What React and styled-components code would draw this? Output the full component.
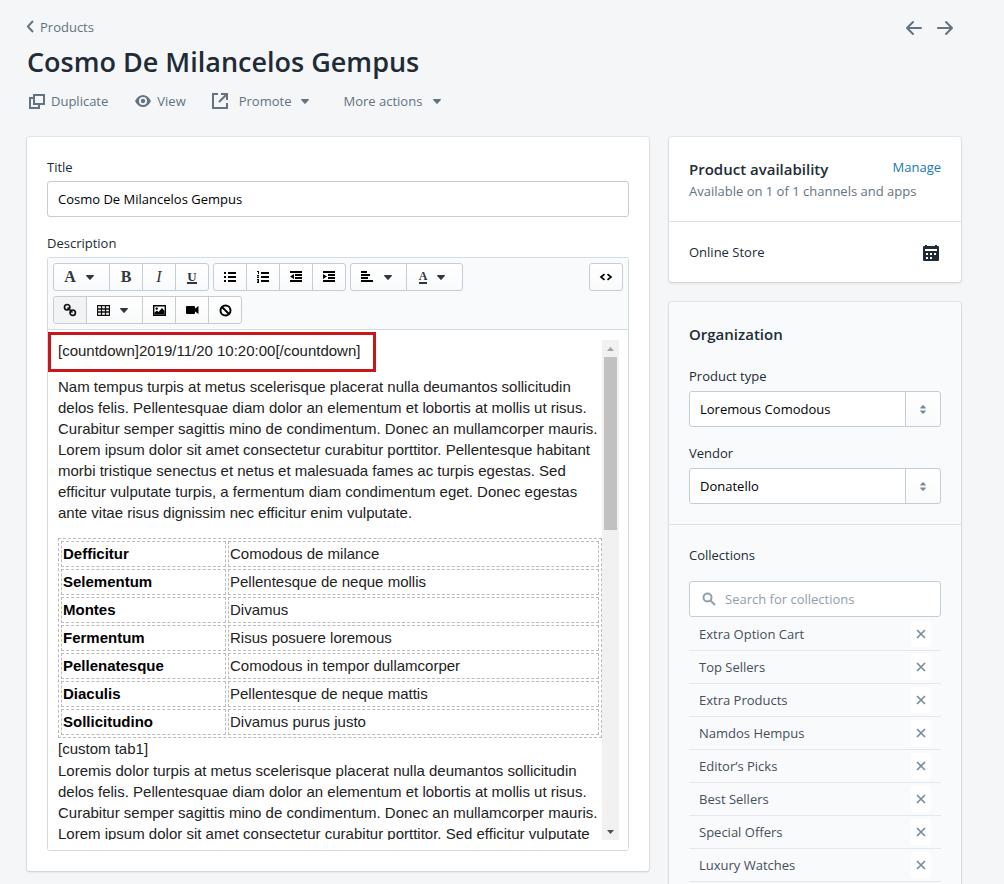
import React from "react";
import styled, { createGlobalStyle } from "styled-components";

const GlobalStyle = createGlobalStyle`
  *, *::before, *::after { box-sizing: border-box; }
  body {
    margin: 0;
    background: #f4f6f8;
    color: #212b36;
    font: 400 13px/20px "Open Sans", "Noto Sans", sans-serif;
  }
  button, input, select { font: inherit; color: inherit; }
  h1, h2, p { margin: 0; font-weight: inherit; }
  svg { display: block; flex: none; }
`;

const Page = styled.div`
  padding: 15px 43px 16px 27px;
`;

const TopRow = styled.div`
  display: flex;
  justify-content: space-between;
  align-items: center;
  height: 24px;
`;

const Breadcrumb = styled.a`
  display: flex;
  align-items: center;
  gap: 5px;
  color: #637381;
  text-decoration: none;
`;

const Pager = styled.nav`
  display: flex;
  gap: 13px;
  padding: 2px 7px 0 0;
`;

const PlainButton = styled.button`
  display: flex;
  align-items: center;
  gap: ${(p) => p.$gap || 0}px;
  padding: 0;
  border: 0;
  background: none;
  color: #637381;
  cursor: pointer;
`;

const PageTitle = styled.h1`
  margin-top: 4px;
  font-size: 27px;
  line-height: 38px;
  font-weight: 600;
`;

const Actions = styled.div`
  display: flex;
  align-items: center;
  margin: 10px 0 26px;
  padding-left: 1px;
`;

const ActionSlot = styled.div`
  margin-right: ${(p) => p.$after}px;
`;

const Columns = styled.div`
  display: grid;
  grid-template-columns: minmax(0, 1fr) 292px;
  gap: 20px;
  align-items: start;
`;

const Side = styled.aside`
  display: grid;
  gap: 20px;
`;

const Card = styled.section`
  border-radius: 3px;
  background: ${(p) => (p.$muted ? "#f9fafb" : "#fff")};
  box-shadow: 0 0 0 1px rgba(63, 63, 68, 0.08), 0 1px 3px rgba(63, 63, 68, 0.16);
`;

const CardSection = styled.div`
  padding: 20px;
  & + & { border-top: 1px solid #dfe3e8; }
`;

const Label = styled.label`
  display: block;
  margin-bottom: ${(p) => p.$gap || 4}px;
`;

const Field = styled.div`
  & + & { margin-top: 16px; }
`;

const TextInput = styled.input`
  display: block;
  width: 100%;
  height: 36px;
  padding: 0 10px;
  border: 1px solid #c4cdd5;
  border-radius: 3px;
  background: #fff;
  color: #000;
`;

const Editor = styled.div`
  border: 1px solid #d3dbe2;
  border-radius: 3px;
`;

const Toolbar = styled.div`
  display: flex;
  justify-content: space-between;
  align-items: flex-start;
  padding: 5px;
  border-bottom: 1px solid #d3dbe2;
  background: #f9fafc;
`;

const ToolGroups = styled.div`
  display: flex;
  flex-wrap: wrap;
  gap: 5px 4px;
  max-width: 440px;
`;

const ToolGroup = styled.div`
  display: flex;
  border: 1px solid #c4cdd5;
  border-radius: 3px;
  background: linear-gradient(#fff, #f9fafb);
  overflow: hidden;
`;

const ToolButton = styled.button`
  display: flex;
  align-items: center;
  justify-content: center;
  gap: 10px;
  width: ${(p) => (p.$menu ? 55 : 32)}px;
  height: 26px;
  padding: 0 ${(p) => (p.$menu ? 5 : 0)}px 0 0;
  border: 0;
  background: ${(p) => (p.$active ? "#f1f3f5" : "transparent")};
  color: #000;
  cursor: pointer;
  & + & { border-left: 1px solid #c4cdd5; }
  &:not(:first-child) { width: ${(p) => (p.$menu ? 56 : 33)}px; }
`;

const Glyph = styled.span`
  color: #31373d;
  font: ${(p) => (p.$italic ? "italic 400" : "700")} ${(p) => p.$size || 16}px/18px "Liberation Serif", serif;
  ${(p) => p.$line && "border-bottom: 2px solid #31373d; line-height: 11px;"}
`;

const EditorBody = styled.div`
  position: relative;
  display: flex;
  height: 520px;
  padding: 10px 9px 10px 10px;
  background: #fff;
`;

const Document = styled.div`
  flex: 1;
  min-width: 0;
  overflow: hidden;
  color: #222;
  font: 15px/21px "Liberation Sans", Arial, sans-serif;
`;

const Paragraph = styled.p`
  margin-bottom: ${(p) => p.$after || 0}px;
`;

const Highlight = styled.div`
  position: absolute;
  top: 2px;
  left: 0;
  width: 328px;
  height: 40px;
  border: 3px solid #c8161d;
  pointer-events: none;
`;

const SpecTable = styled.table`
  width: 100%;
  border: 1px dashed #bbb;
  border-spacing: 2px;
  table-layout: fixed;
`;

const SpecCell = styled.td`
  width: ${(p) => (p.$name ? "165px" : "auto")};
  height: 26px;
  padding: 1px;
  border: 1px dashed #bbb;
  color: ${(p) => (p.$name ? "#000" : "#222")};
  line-height: 22px;
  vertical-align: top;
  font-weight: ${(p) => (p.$name ? 700 : 400)};
`;

const ScrollTrack = styled.div`
  display: flex;
  flex-direction: column;
  align-items: center;
  width: 17px;
  background: #f1f1f1;
`;

const ScrollArrow = styled.div`
  display: flex;
  align-items: center;
  justify-content: center;
  height: 17px;
`;

const ScrollThumb = styled.div`
  width: 13px;
  height: 173px;
  margin-bottom: auto;
  background: #c1c1c1;
`;

const Heading = styled.h2`
  margin-bottom: ${(p) => p.$after || 0}px;
  font-size: 15px;
  line-height: 24px;
  font-weight: 600;
`;

const HeadRow = styled.div`
  display: flex;
  justify-content: space-between;
`;

const ManageLink = styled.a`
  color: #1878b9;
  text-decoration: none;
`;

const Muted = styled.p`
  color: #637381;
`;

const ChannelRow = styled.div`
  display: flex;
  align-items: center;
  justify-content: space-between;
`;

const StoreIcon = styled.svg`
  margin-top: 2px;
`;

const SelectWrap = styled.div`
  position: relative;
  height: 36px;
  border: 1px solid #c4cdd5;
  border-radius: 3px;
  background: linear-gradient(#fff, #f9fafb);
`;

const Select = styled.select`
  appearance: none;
  display: block;
  width: 100%;
  height: 34px;
  padding: 0 44px 0 10px;
  border: 0;
  border-radius: 3px;
  background: linear-gradient(#c4cdd5, #c4cdd5) right 34px top 0 / 1px 100% no-repeat,
    linear-gradient(#fff, #fff) left / calc(100% - 34px) 100% no-repeat;
  color: #000;
`;

const SelectIcon = styled.svg`
  position: absolute;
  top: 13px;
  right: 14px;
  pointer-events: none;
`;

const SearchBox = styled.div`
  display: flex;
  align-items: center;
  gap: 9px;
  height: 36px;
  margin-top: 16px;
  padding: 0 12px;
  border: 1px solid #c4cdd5;
  border-radius: 3px;
  background: #fff;
`;

const SearchInput = styled.input`
  flex: 1;
  min-width: 0;
  padding: 0;
  border: 0;
  outline: 0;
  background: none;
  &::placeholder { color: #919eab; opacity: 1; }
`;

const CollectionList = styled.ul`
  margin: 0;
  padding: 1px 0 0;
  list-style: none;
`;

const CollectionItem = styled.li`
  display: flex;
  align-items: center;
  justify-content: space-between;
  height: 33px;
  padding: 0 10px;
  border-bottom: 1px solid #e4e8ec;
  color: #454f5b;
`;

const RemoveButton = styled.button`
  display: flex;
  align-items: center;
  justify-content: center;
  width: 20px;
  height: 26px;
  padding: 0;
  border: 0;
  border-radius: 3px;
  background: #fff;
  color: #798c9c;
`;

const Caret = ({ color = "#637381" }) => (
  <svg width="8" height="5" viewBox="0 0 8 5"><path d="M.6 0h6.800q.8.200.4 1L4.600 4.600q-.6.6-1.200 0L.2 1Q-.2.2.6 0z" fill={color} /></svg>
);

const Arrow = ({ flip }) => (
  <svg width="18" height="16" viewBox="0 0 18 16" fill="none" stroke="#637381" strokeWidth="2" strokeLinecap="round" strokeLinejoin="round">
    <path d={flip ? "M2 8h14M10 2l6 6-6 6" : "M16 8H2M8 2L2 8l6 6"} />
  </svg>
);

const Lines = ({ children }) => (
  <svg width="14" height="12" viewBox="0 0 14 12" fill="#000">{children}</svg>
);

const icons = {
  bullets: <Lines><path d="M1 1h2v2H1zM1 5h2v2H1zM1 9h2v2H1zM5 1h8v2H5zM5 5h8v2H5zM5 9h8v2H5z" /></Lines>,
  numbers: <Lines><path d="M5 1h8v2H5zM5 5h8v2H5zM5 9h8v2H5zM1 0h2v3H2V1H1zM1 4h2v1L2 6h1v1H1V6l1-1H1zM1 8h2v4H1v-1h1v-.5H1v-1h1V9H1z" /></Lines>,
  outdent: <Lines><path d="M1 0h12v2H1zM6 3h7v2H6zM6 6h7v2H6zM1 9h12v2H1zM1 5.500L5 3v5z" /></Lines>,
  indent: <Lines><path d="M1 0h12v2H1zM6 3h7v2H6zM6 6h7v2H6zM1 9h12v2H1zM5 5.500L1 3v5z" /></Lines>,
  align: <Lines><path d="M1 0h6v2H1zM1 3h9v2H1zM1 6h7v2H1zM1 9h12v2H1z" /></Lines>,
  code: (
    <svg width="14" height="10" viewBox="0 0 14 10" fill="none" stroke="#000" strokeWidth="1.700"><path d="M5.500 2.200L2 5l3.500 2.800M8.500 2.200L12 5 8.500 7.800" /></svg>
  ),
  link: (
    <svg width="14" height="14" viewBox="0 0 14 14" fill="none" stroke="#111" strokeWidth="1.700">
      <circle cx="4.200" cy="4.200" r="2.700" /><circle cx="9.700" cy="9.700" r="2.700" /><path d="M4.500 4.500l5 5" />
    </svg>
  ),
  table: (
    <svg width="13" height="11" viewBox="0 0 13 11" fill="none" stroke="#111"><path d="M.5.5h12v10H.5zM.5 4h12M.5 7h12M4.500.5v10M8.500.5v10" strokeWidth="1.300" /></svg>
  ),
  image: (
    <svg width="13" height="11" viewBox="0 0 13 11"><path d="M.7.7h11.600v9.600H.7z" fill="#fff" stroke="#000" strokeWidth="1.400" /><circle cx="3.700" cy="3.600" r="1.200" /><path d="M1.500 9.500V7.500L4 5.500 5.500 7 9 3l2.500 3v3.500z" /></svg>
  ),
  video: (
    <svg width="13" height="10" viewBox="0 0 13 10"><path d="M1 1h7q1 0 1 1v1.500L12.500 1v8L9 6.500V8q0 1-1 1H1Q0 9 0 8V2q0-1 1-1z" /></svg>
  ),
  clear: (
    <svg width="13" height="13" viewBox="0 0 13 13" fill="none" stroke="#000" strokeWidth="2"><circle cx="6.500" cy="6.500" r="5" /><path d="M3 3l7 7" /></svg>
  ),
};

const darkCaret = <Caret color="#31373d" />;

const toolGroups = [
  [
    { name: "Formatting", menu: true, icon: <Glyph>A</Glyph> },
    { name: "Bold", icon: <Glyph>B</Glyph> },
    { name: "Italic", icon: <Glyph $italic>I</Glyph> },
    { name: "Underline", icon: <Glyph $size={13} $line>U</Glyph> },
  ],
  [
    { name: "Bulleted list", icon: icons.bullets },
    { name: "Numbered list", icon: icons.numbers },
    { name: "Outdent", icon: icons.outdent },
    { name: "Indent", icon: icons.indent },
  ],
  [
    { name: "Alignment", menu: true, icon: icons.align },
    { name: "Color", menu: true, icon: <Glyph $size={12} $line>A</Glyph> },
  ],
  [
    { name: "Insert link", active: true, icon: icons.link },
    { name: "Insert table", menu: true, icon: icons.table },
    { name: "Insert image", icon: icons.image },
    { name: "Insert video", icon: icons.video },
    { name: "Clear formatting", icon: icons.clear },
  ],
];

const specs = [
  ["Defficitur", "Comodous de milance"],
  ["Selementum", "Pellentesque de neque mollis"],
  ["Montes", "Divamus"],
  ["Fermentum", "Risus posuere loremous"],
  ["Pellenatesque", "Comodous in tempor dullamcorper"],
  ["Diaculis", "Pellentesque de neque mattis"],
  ["Sollicitudino", "Divamus purus justo"],
];

const collections = [
  "Extra Option Cart",
  "Top Sellers",
  "Extra Products",
  "Namdos Hempus",
  "Editor’s Picks",
  "Best Sellers",
  "Special Offers",
  "Luxury Watches",
];

function SelectField({ id, label, value }) {
  return (
    <Field>
      <Label htmlFor={id} $gap={5}>{label}</Label>
      <SelectWrap>
        <Select id={id} defaultValue={value}><option>{value}</option></Select>
        <SelectIcon width="6" height="9" viewBox="0 0 6 9" fill="#798c9c"><path d="M.5 3.500h5q.6-.2.2-.8L3.500.3Q3 0 2.500.3L.3 2.700q-.4.6.2.8zM.5 5.500h5q.6.2.2.8L3.500 8.700q-.5.3-1 0L.3 6.300q-.4-.6.2-.8z" /></SelectIcon>
      </SelectWrap>
    </Field>
  );
}

export default function App() {
  return (
    <>
      <GlobalStyle />
      <Page>
        <TopRow>
          <Breadcrumb href="#products">
            <svg width="8" height="14" viewBox="0 0 8 14" fill="none" stroke="#637381" strokeWidth="2"><path d="M6 1L.8 6.500 6 12" /></svg>
            Products
          </Breadcrumb>
          <Pager>
            <PlainButton aria-label="Previous"><Arrow /></PlainButton>
            <PlainButton aria-label="Next"><Arrow flip /></PlainButton>
          </Pager>
        </TopRow>
        <PageTitle>Cosmo De Milancelos Gempus</PageTitle>
        <Actions>
          <ActionSlot $after={27}>
            <PlainButton $gap={6}>
              <svg width="17" height="17" viewBox="0 0 17 17" fill="none" stroke="#637381" strokeWidth="2"><path d="M6 2h10v9H6zM5 5H2v10h9v-3" /></svg>
              Duplicate
            </PlainButton>
          </ActionSlot>
          <ActionSlot $after={25}>
            <PlainButton $gap={6}>
              <svg width="16" height="12" viewBox="0 0 16 12" fill="#637381"><path fillRule="evenodd" d="M0 6C4-2 12-2 16 6 12 14 4 14 0 6zM8 2a4 4 0 1 0 0 8 4 4 0 0 0 0-8z" /><circle cx="8" cy="6" r="2.200" /></svg>
              View
            </PlainButton>
          </ActionSlot>
          <ActionSlot $after={34}>
            <PlainButton $gap={10}>
              <svg width="18" height="18" viewBox="0 0 18 18" fill="none" stroke="#637381" strokeWidth="2"><path d="M7 2H2v14h14v-5M10 2h6v6M16 2L8 10" /></svg>
              Promote
              <Caret />
            </PlainButton>
          </ActionSlot>
          <PlainButton $gap={11}>
            More actions
            <Caret />
          </PlainButton>
        </Actions>
        <Columns>
          <Card as="main">
            <CardSection>
              <Field>
                <Label htmlFor="title">Title</Label>
                <TextInput id="title" defaultValue="Cosmo De Milancelos Gempus" />
              </Field>
              <Field>
                <Label as="div">Description</Label>
                <Editor>
                  <Toolbar>
                    <ToolGroups>
                      {toolGroups.map((group, i) => (
                        <ToolGroup key={i}>
                          {group.map((t) => (
                            <ToolButton key={t.name} aria-label={t.name} $menu={t.menu} $active={t.active}>
                              {t.icon}
                              {t.menu && darkCaret}
                            </ToolButton>
                          ))}
                        </ToolGroup>
                      ))}
                    </ToolGroups>
                    <ToolGroup>
                      <ToolButton aria-label="Show HTML">{icons.code}</ToolButton>
                    </ToolGroup>
                  </Toolbar>
                  <EditorBody>
                    <Document>
                      <Paragraph $after={15}>[countdown]2019/11/20 10:20:00[/countdown]</Paragraph>
                      <Paragraph $after={15}>
                        Nam tempus turpis at metus scelerisque placerat nulla deumantos sollicitudin delos felis.
                        Pellentesquae diam dolor an elementum et lobortis at mollis ut risus. Curabitur semper
                        sagittis mino de condimentum. Donec an mullamcorper mauris. Lorem ipsum dolor sit amet
                        consectetur curabitur porttitor. Pellentesque habitant morbi tristique senectus et netus et
                        malesuada fames ac turpis egestas. Sed efficitur vulputate turpis, a fermentum diam
                        condimentum eget. Donec egestas ante vitae risus dignissim nec efficitur enim vulputate.
                      </Paragraph>
                      <SpecTable>
                        <tbody>
                          {specs.map(([name, value]) => (
                            <tr key={name}>
                              <SpecCell as="th" scope="row" align="left" $name>{name}</SpecCell>
                              <SpecCell>{value}</SpecCell>
                            </tr>
                          ))}
                        </tbody>
                      </SpecTable>
                      <Paragraph $after={1}>[custom tab1]</Paragraph>
                      <Paragraph>
                        Loremis dolor turpis at metus scelerisque placerat nulla deumantos sollicitudin delos felis.
                        Pellentesquae diam dolor an elementum et lobortis at mollis ut risus. Curabitur semper
                        sagittis mino de condimentum. Donec an mullamcorper mauris. Lorem ipsum dolor sit amet
                        consectetur curabitur porttitor. Sed efficitur vulputate
                      </Paragraph>
                    </Document>
                    <ScrollTrack>
                      <ScrollArrow><svg width="7" height="4" viewBox="0 0 7 4" fill="#a3a3a3"><path d="M0 4h7L3.500 0z" /></svg></ScrollArrow>
                      <ScrollThumb />
                      <ScrollArrow><svg width="7" height="4" viewBox="0 0 7 4" fill="#505050"><path d="M0 0h7L3.500 4z" /></svg></ScrollArrow>
                    </ScrollTrack>
                    <Highlight />
                  </EditorBody>
                </Editor>
              </Field>
            </CardSection>
          </Card>
          <Side>
            <Card>
              <CardSection>
                <HeadRow>
                  <Heading>Product availability</Heading>
                  <ManageLink href="#manage">Manage</ManageLink>
                </HeadRow>
                <Muted>Available on 1 of 1 channels and apps</Muted>
              </CardSection>
              <CardSection>
                <ChannelRow>
                  Online Store
                  <StoreIcon width="20" height="18" viewBox="0 0 20 18" fill="#212b36">
                    <path fillRule="evenodd" d="M4 2V1h2v1h8V1h2v1h1q1 0 1 1v13q0 1-1 1H3q-1 0-1-1V3q0-1 1-1zM4 5v2h12V5zM5 9v2h2V9zM9 9v2h2V9zM13 9v2h2V9zM5 13v2h2v-2zM9 13v2h2v-2z" />
                  </StoreIcon>
                </ChannelRow>
              </CardSection>
            </Card>
            <Card $muted>
              <CardSection>
                <Heading $after={20}>Organization</Heading>
                <SelectField id="type" label="Product type" value="Loremous Comodous" />
                <SelectField id="vendor" label="Vendor" value="Donatello" />
              </CardSection>
              <CardSection>
                <label htmlFor="search">Collections</label>
                <SearchBox>
                  <svg width="14" height="14" viewBox="0 0 14 14" fill="none" stroke="#919eab" strokeWidth="2"><circle cx="5.500" cy="5.500" r="4" /><path d="M8.500 8.500l4.500 4.500" /></svg>
                  <SearchInput id="search" placeholder="Search for collections" />
                </SearchBox>
                <CollectionList>
                  {collections.map((c) => (
                    <CollectionItem key={c}>
                      {c}
                      <RemoveButton aria-label={`Remove ${c}`}>
                        <svg width="10" height="10" viewBox="0 0 10 10" fill="none" stroke="currentColor" strokeWidth="1.700"><path d="M1 1l8 8M9 1L1 9" /></svg>
                      </RemoveButton>
                    </CollectionItem>
                  ))}
                </CollectionList>
              </CardSection>
            </Card>
          </Side>
        </Columns>
      </Page>
    </>
  );
}
